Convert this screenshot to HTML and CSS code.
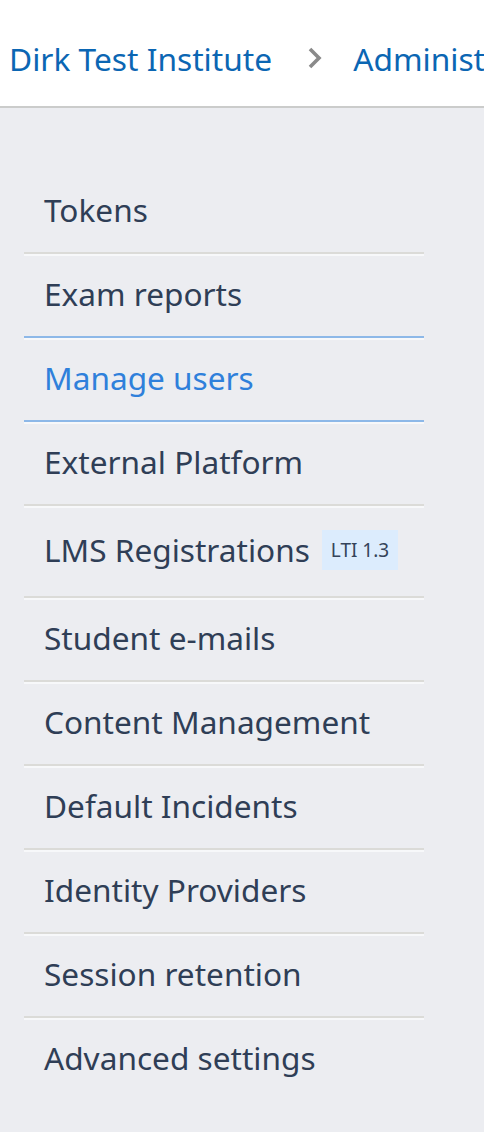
FILE: index.html
```html
<!DOCTYPE html>
<html>
<head>
    <title>Administration</title>
    <link rel="stylesheet" href="styles.css">
</head>
<body>
    <header class="topbar">
        <nav class="breadcrumb">
            <a href="#" class="crumb">Dirk Test Institute</a>
            <svg class="crumb-sep" width="16" height="24" viewBox="0 0 16 24">
                <path d="M3 3 L12 12 L3 21" fill="none" stroke="#8a8a8a" stroke-width="3.6"/>
            </svg>
            <a href="#" class="crumb">Administration</a>
        </nav>
    </header>

    <main class="sidebar">
        <ul class="menu">
            <li class="menu-item"><a href="#">Tokens</a></li>
            <li class="menu-item"><a href="#">Exam reports</a></li>
            <li class="menu-item active"><a href="#">Manage users</a></li>
            <li class="menu-item"><a href="#">External Platform</a></li>
            <li class="menu-item"><a href="#">LMS Registrations</a><span class="badge">LTI 1.3</span></li>
            <li class="menu-item"><a href="#">Student e-mails</a></li>
            <li class="menu-item"><a href="#">Content Management</a></li>
            <li class="menu-item"><a href="#">Default Incidents</a></li>
            <li class="menu-item"><a href="#">Identity Providers</a></li>
            <li class="menu-item"><a href="#">Session retention</a></li>
            <li class="menu-item"><a href="#">Advanced settings</a></li>
        </ul>
    </main>
</body>
</html>
```

FILE: styles.css
```css
html, body {
    margin: 0;
    height: 100%;
}
body {
    font-family: "Noto Sans", "Open Sans", sans-serif;
    background: #ecedf1;
    color: #2f3e56;
    overflow: hidden;
}
a {
    text-decoration: none;
    color: inherit;
}
.topbar {
    height: 106px;
    background: white;
    border-bottom: 2px solid #cbcccb;
    display: flex;
    align-items: center;
    padding-left: 9px;
    overflow: hidden;
    white-space: nowrap;
}
.breadcrumb {
    display: flex;
    align-items: center;
    padding-top: 10px;
}
.crumb {
    font-size: 31.7px;
    color: #0b66b3;
}
.crumb-sep {
    flex-shrink: 0;
    margin: 0 30px 0 35px;
}
.sidebar {
    padding: 64px 0 0 24px;
}
.menu {
    list-style: none;
    margin: 0;
    padding: 0;
    width: 400px;
}
.menu-item {
    display: flex;
    align-items: center;
    gap: 12px;
    padding: 22px 0 26px 20px;
    line-height: 32px;
    font-size: 31.6px;
    border-bottom: 2px solid #dbdbd8;
}
.menu-item + .menu-item {
    border-top: 2px solid #f7f8fa;
}
.menu-item:last-child {
    border-bottom: none;
}
.menu-item.active,
.menu-item:has(+ .menu-item.active) {
    border-bottom-color: #8db8e8;
}
.menu-item.active a {
    color: #2f80db;
}
.badge {
    background: #dcecfd;
    font-size: 19px;
    line-height: 40px;
    padding: 0 9px;
    color: #34435a;
}
```
